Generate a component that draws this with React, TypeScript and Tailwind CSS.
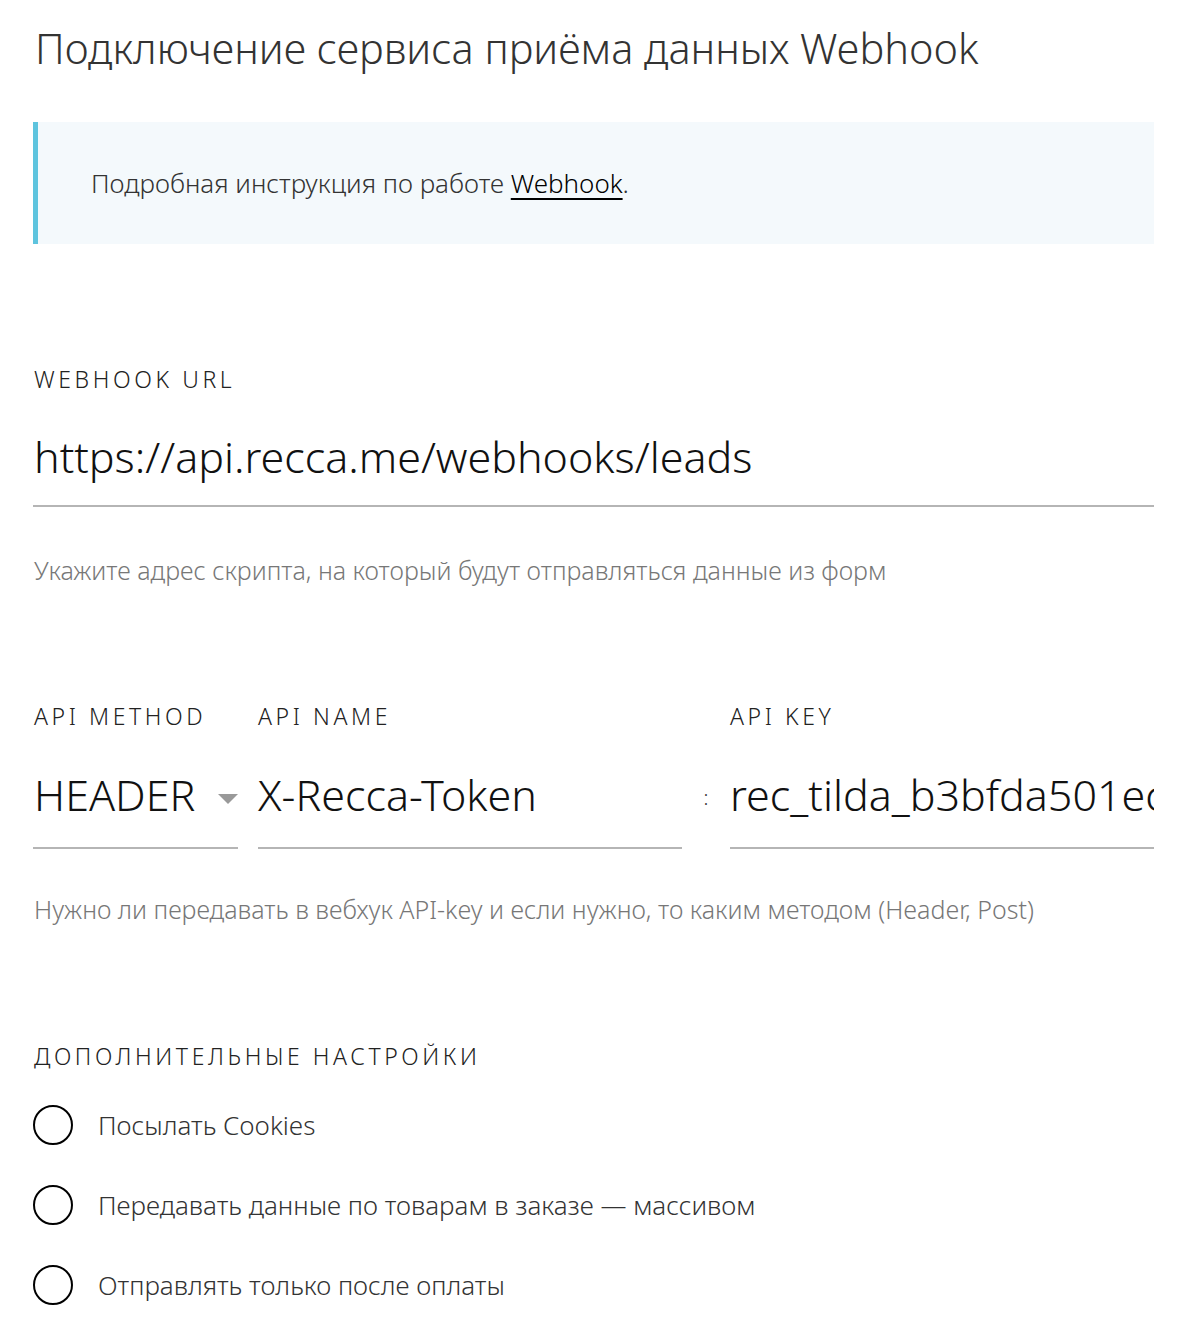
import React from 'react'

const font = { fontFamily: '"Noto Sans", "Open Sans", sans-serif' }

function Label({ children }: { children: React.ReactNode }) {
  return (
    <div className="text-[23px] leading-none font-light tracking-[3.6px] text-[#222] uppercase">
      {children}
    </div>
  )
}

function Radio({ label }: { label: string }) {
  return (
    <label className="flex items-center gap-[25px] h-[40px]">
      <span className="block w-[40px] h-[40px] rounded-full border-2 border-black shrink-0" />
      <span className="text-[26px] text-[#333] font-light">{label}</span>
    </label>
  )
}

export default function App() {
  return (
    <div className="bg-white min-h-[1340px] w-[1184px] pl-[33px] pr-[30px] pt-[22px]" style={font}>
      <h1 className="text-[41.5px] leading-[52px] font-light text-[#333] pl-[2px]">
        Подключение сервиса приёма данных Webhook
      </h1>

      {/* info block */}
      <div className="mt-[48px] h-[122px] bg-[#f4f9fc] border-l-[5px] border-[#5ec4de] flex items-center pl-[53px]">
        <p className="text-[26px] text-[#333] font-light">
          Подробная инструкция по работе{' '}
          <a href="#" className="text-black underline underline-offset-[5px] decoration-[2px]">Webhook</a>.
        </p>
      </div>

      {/* webhook url */}
      <div className="mt-[124px] pl-[1px]">
        <Label>Webhook URL</Label>
      </div>
      <div className="mt-[41px] h-[75px] border-b-2 border-[#b5b5b5] pl-[1px] text-[43px] leading-[50px] font-light text-[#111]">
        https://api.recca.me/webhooks/leads
      </div>
      <p className="mt-[46px] pl-[1px] text-[25px] leading-[34px] font-light text-[#777]">
        Укажите адрес скрипта, на который будут отправляться данные из форм
      </p>

      {/* api fields */}
      <div className="mt-[118px] flex">
        <div className="w-[205px] shrink-0">
          <div className="pl-[1px]">
            <Label>API Method</Label>
          </div>
          <div className="mt-[42px] h-[79px] border-b-2 border-[#b5b5b5] flex items-start justify-between pl-[1px]">
            <span className="text-[43px] leading-[50px] font-light text-[#111]">HEADER</span>
            <svg className="mt-[24px]" width="20" height="10" viewBox="0 0 20 10">
              <path d="M0 0 L20 0 L10 10 Z" fill="#999" />
            </svg>
          </div>
        </div>
        <div className="w-[424px] ml-[20px] shrink-0">
          <Label>API Name</Label>
          <div className="mt-[42px] h-[79px] border-b-2 border-[#b5b5b5] text-[43px] leading-[50px] font-light text-[#111]">
            X-Recca-Token
          </div>
        </div>
        <div className="w-[48px] shrink-0 flex justify-center pt-[78px] text-[20px] font-light text-[#333]">:</div>
        <div className="w-[424px] shrink-0">
          <Label>API Key</Label>
          <div className="mt-[42px] h-[79px] border-b-2 border-[#b5b5b5] overflow-hidden whitespace-nowrap text-[43px] leading-[50px] font-light text-[#111]">
            rec_tilda_b3bfda501ec4d27a9
          </div>
        </div>
      </div>
      <p className="mt-[43px] pl-[1px] text-[25px] leading-[34px] font-light text-[#777]">
        Нужно ли передавать в вебхук API-key и если нужно, то каким методом (Header, Post)
      </p>

      {/* extra options */}
      <div className="mt-[119px] pl-[1px]">
        <Label>Дополнительные настройки</Label>
      </div>
      <div className="mt-[37px] flex flex-col gap-[40px]">
        <Radio label="Посылать Cookies" />
        <Radio label="Передавать данные по товарам в заказе — массивом" />
        <Radio label="Отправлять только после оплаты" />
      </div>
    </div>
  )
}
